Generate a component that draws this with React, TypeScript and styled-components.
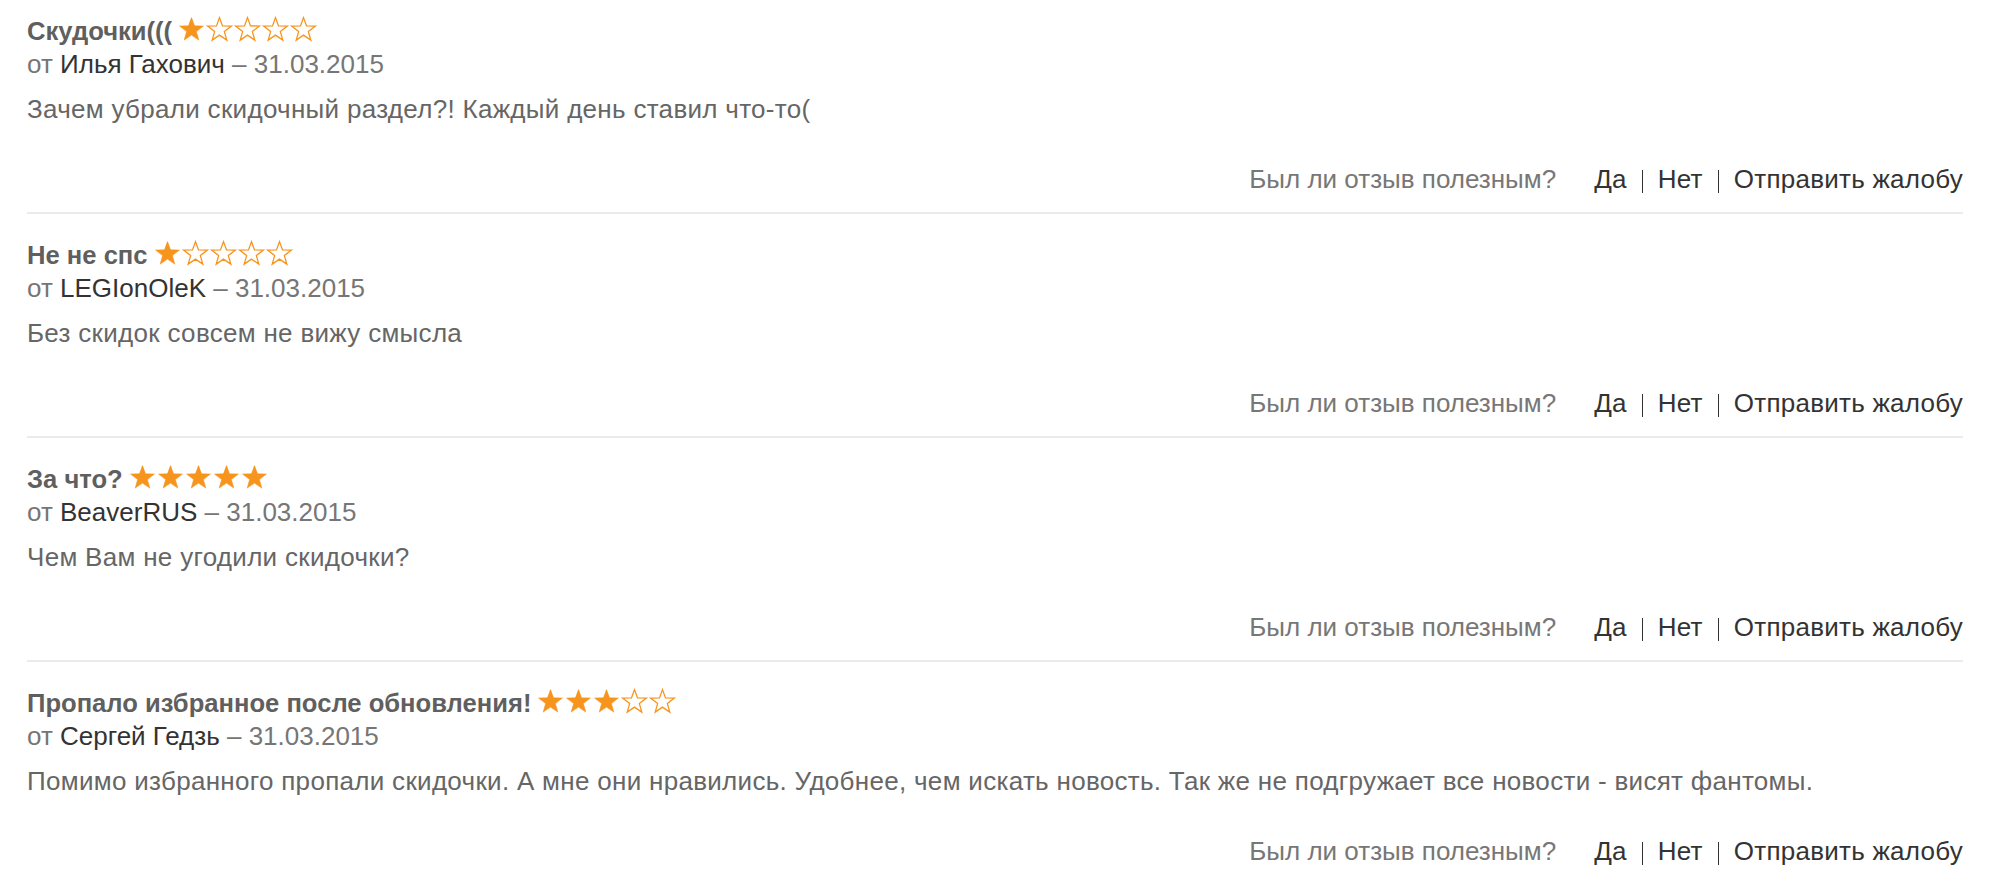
import React from "react";
import styled, { createGlobalStyle } from "styled-components";

const GlobalStyle = createGlobalStyle`
  html, body {
    margin: 0;
    padding: 0;
    background: #ffffff;
  }
  body {
    font-family: "Liberation Sans", Arial, Helvetica, sans-serif;
    -webkit-font-smoothing: antialiased;
  }
`;

const List = styled.div`
  width: 1936px;
  margin-left: 27px;
  display: flex;
  flex-direction: column;
`;

const Review = styled.article`
  padding: 26px 0 18px;
  border-bottom: 2px solid #ebebeb;
  &:first-child {
    padding-top: 16px;
  }
`;

const TitleRow = styled.div`
  font-size: 25.6px;
  line-height: 30px;
  height: 30px;
  font-weight: 700;
  color: #5f5f5f;
  white-space: nowrap;
`;

const Stars = styled.span`
  display: inline-flex;
  gap: 3px;
  margin-left: 7px;
  vertical-align: baseline;
  height: 24px;
  position: relative;
  top: 1px;
`;

const Byline = styled.div`
  font-size: 26px;
  line-height: 36px;
  color: #767676;
`;

const Author = styled.span`
  color: #333333;
`;

const Body = styled.p`
  margin: 12px 0 0;
  font-size: 26px;
  letter-spacing: 0.3px;
  line-height: 30px;
  color: #666666;
`;

const Footer = styled.div`
  margin-top: 40px;
  display: flex;
  justify-content: flex-end;
  align-items: center;
  font-size: 26px;
  line-height: 30px;
  color: #333333;
`;

const Question = styled.span`
  color: #777777;
  margin-right: 38px;
`;

const Action = styled.span`
  color: #333333;
  letter-spacing: 0.25px;
  cursor: pointer;
`;

const Divider = styled.span`
  display: inline-block;
  width: 1px;
  height: 23px;
  background: #333333;
  margin: 4px 15px 0;
`;

const STAR =
  "M12.5 0.6 L15.5 8.87 L24.4 9.08 L17.35 14.58 L19.8 23.1 L12.5 18.1 L5.2 23.1 L7.65 14.58 L0.6 9.08 L9.5 8.87 Z";

const StarIcon: React.FC<{ filled: boolean }> = ({ filled }) => (
  <svg width="25" height="24" viewBox="0 0 25 24" style={{ overflow: "visible" }}>
    <path
      d={STAR}
      fill={filled ? "#f7941d" : "none"}
      stroke="#f7941d"
      strokeWidth={filled ? 0.6 : 1.3}
      strokeLinejoin="miter"
    />
  </svg>
);

type ReviewData = {
  title: string;
  rating: number;
  author: string;
  date: string;
  text: string;
};

const reviews: ReviewData[] = [
  {
    title: "Скудочки(((",
    rating: 1,
    author: "Илья Гахович",
    date: "31.03.2015",
    text: "Зачем убрали скидочный раздел?! Каждый день ставил что-то(",
  },
  {
    title: "Не не спс",
    rating: 1,
    author: "LEGIonOleK",
    date: "31.03.2015",
    text: "Без скидок совсем не вижу смысла",
  },
  {
    title: "За что?",
    rating: 5,
    author: "BeaverRUS",
    date: "31.03.2015",
    text: "Чем Вам не угодили скидочки?",
  },
  {
    title: "Пропало избранное после обновления!",
    rating: 3,
    author: "Сергей Гедзь",
    date: "31.03.2015",
    text: "Помимо избранного пропали скидочки. А мне они нравились. Удобнее, чем искать новость. Так же не подгружает все новости - висят фантомы.",
  },
];

export default function App() {
  return (
    <>
      <GlobalStyle />
      <List>
        {reviews.map((r, i) => (
          <Review key={i}>
            <TitleRow>
              {r.title}
              <Stars>
                {[0, 1, 2, 3, 4].map((s) => (
                  <StarIcon key={s} filled={s < r.rating} />
                ))}
              </Stars>
            </TitleRow>
            <Byline>
              от <Author>{r.author}</Author> – {r.date}
            </Byline>
            <Body>{r.text}</Body>
            <Footer>
              <Question>Был ли отзыв полезным?</Question>
              <Action>Да</Action>
              <Divider />
              <Action>Нет</Action>
              <Divider />
              <Action>Отправить жалобу</Action>
            </Footer>
          </Review>
        ))}
      </List>
    </>
  );
}
